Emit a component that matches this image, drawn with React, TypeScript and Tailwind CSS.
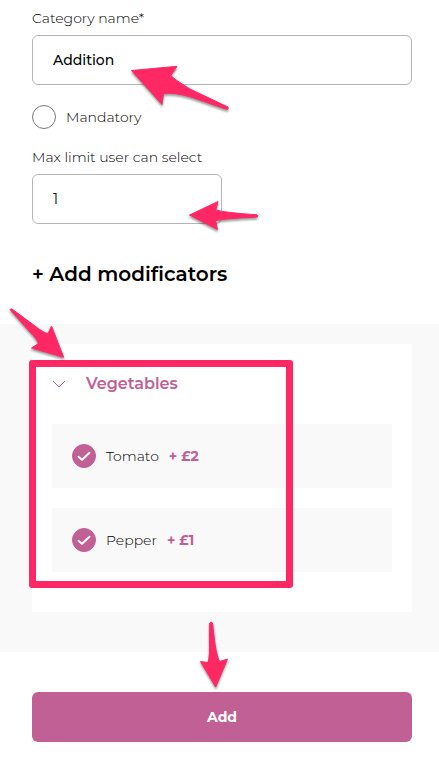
import { useState } from "react";

type ArrowProps = { className: string; viewBox: string; d: string };

function Arrow({ className, viewBox, d }: ArrowProps) {
  return (
    <svg
      aria-hidden="true"
      viewBox={viewBox}
      className={`pointer-events-none absolute z-20 overflow-visible drop-shadow-[0_2px_1px_rgba(0,0,0,0.4)] ${className}`}
    >
      <path d={d} fill="#ff2865" stroke="#ff2865" strokeWidth="1" strokeLinejoin="round" />
    </svg>
  );
}

type ModifierProps = { id: string; name: string; price: string };

function Modifier({ id, name, price }: ModifierProps) {
  const [checked, setChecked] = useState(true);
  return (
    <li className="flex h-16 items-center bg-[#f9f9f9] px-5">
      <span className="relative flex size-6 shrink-0">
        <input
          id={id}
          type="checkbox"
          checked={checked}
          onChange={() => setChecked(!checked)}
          className="peer size-6 appearance-none rounded-full border border-[#c06095] checked:bg-[#c06095]"
        />
        <svg
          viewBox="0 0 24 24"
          aria-hidden="true"
          className="pointer-events-none absolute inset-0 hidden size-6 peer-checked:block"
        >
          <path
            d="M6.500 12.700 10 15.700 17.500 8.700"
            fill="none"
            stroke="#fff"
            strokeWidth="2"
            strokeLinecap="round"
            strokeLinejoin="round"
          />
        </svg>
      </span>
      <label htmlFor={id} className="ml-2.5 flex gap-2.5">
        <span>{name}</span>
        <span className="font-bold text-[#c06095]">{price}</span>
      </label>
    </li>
  );
}

export default function App() {
  const [name, setName] = useState("Addition");
  const [limit, setLimit] = useState("1");
  const [open, setOpen] = useState(true);

  return (
    <form
      onSubmit={(e) => e.preventDefault()}
      className="bg-white pt-2 pb-6 font-[Montserrat,Inter,sans-serif] text-sm leading-5 font-light text-black"
    >
      <div className="pr-[27px] pl-8">
        <div className="relative flex flex-col gap-[7px]">
          <label htmlFor="category">Category name*</label>
          <input
            id="category"
            value={name}
            onChange={(e) => setName(e.target.value)}
            className="h-[50px] w-full rounded-md border border-[#b5b5b5] px-5 font-medium outline-none"
          />
          <Arrow
            className="top-[57px] left-[99px] h-[45px] w-[98px]"
            viewBox="131 65 98 45"
            d="M131.500 70.500 L177 66.300 L170.800 75.500 Q174 79 190 89 L228 107 Q229 109.500 226.500 109.300 L191 97 Q174 92 163.500 93.500 L162 104.500 Z"
          />
        </div>

        <div className="mt-5 flex h-6 items-center gap-2.5">
          <input
            id="mandatory"
            type="checkbox"
            className="size-6 shrink-0 appearance-none rounded-full border border-[#777] checked:bg-[#c06095]"
          />
          <label htmlFor="mandatory">Mandatory</label>
        </div>

        <div className="relative mt-[18px] flex flex-col gap-[7px]">
          <label htmlFor="limit">Max limit user can select</label>
          <input
            id="limit"
            inputMode="numeric"
            value={limit}
            onChange={(e) => setLimit(e.target.value)}
            className="h-[50px] w-1/2 rounded-md border border-[#b5b5b5] px-5 font-normal outline-none"
          />
          <Arrow
            className="top-[53px] left-[157px] h-[30px] w-[70px]"
            viewBox="189 200 70 30"
            d="M189.500 215 L218 201.500 L215.800 210 Q224 212.500 257 214.800 Q259 216 257 217 Q225 218.500 215.500 220.500 L217.500 229.500 Z"
          />
        </div>

        <h2 className="my-9 text-xl leading-7 font-semibold">
          <button type="button">+ Add modificators</button>
        </h2>
      </div>

      <section className="relative bg-[#f9f9f9] pt-5 pr-[27px] pb-10 pl-8">
        <div className="bg-white px-5 pb-10">
          <h3>
            <button
              type="button"
              aria-expanded={open}
              onClick={() => setOpen(!open)}
              className="flex h-20 w-full items-center gap-5 text-base font-semibold text-[#c06095]"
            >
              <svg viewBox="0 0 14 8" aria-hidden="true" className="h-2 w-3.5">
                <path d="M1 1 7 7 13 1" fill="none" stroke="currentColor" strokeWidth="1" />
              </svg>
              Vegetables
            </button>
          </h3>
          {open && (
            <ul className="flex flex-col gap-5">
              <Modifier id="tomato" name="Tomato" price="+ £2" />
              <Modifier id="pepper" name="Pepper" price="+ £1" />
            </ul>
          )}
        </div>
        <div
          aria-hidden="true"
          className="pointer-events-none absolute top-9 left-[29px] h-[228px] w-[264px] rounded-[3px] border-[7px] border-[#ff2865]"
        />
        <Arrow
          className="-top-4 left-2 h-[50px] w-14"
          viewBox="8 308 56 50"
          d="M10 309.500 Q11.500 308 13 309.700 L35 326 Q43 332.500 48 333.500 L51.500 326 L63.700 357.300 L31.500 348 L38.500 343.500 Q37 339 30 332 Z"
        />
        <Arrow
          className="-bottom-9 left-[199px] h-[66px] w-[30px]"
          viewBox="199 622 30 66"
          d="M209.700 623 Q211 621 212.500 623 L215 644 Q217.500 659 219.800 661.500 L227.500 659 L215.700 687 L200.500 661.500 L208 662.500 Q210 657 209.500 640 Z"
        />
      </section>

      <div className="pt-10 pr-[27px] pl-8">
        <button
          type="submit"
          className="h-[50px] w-full rounded-md bg-[#c06095] font-bold text-white"
        >
          Add
        </button>
      </div>
    </form>
  );
}
